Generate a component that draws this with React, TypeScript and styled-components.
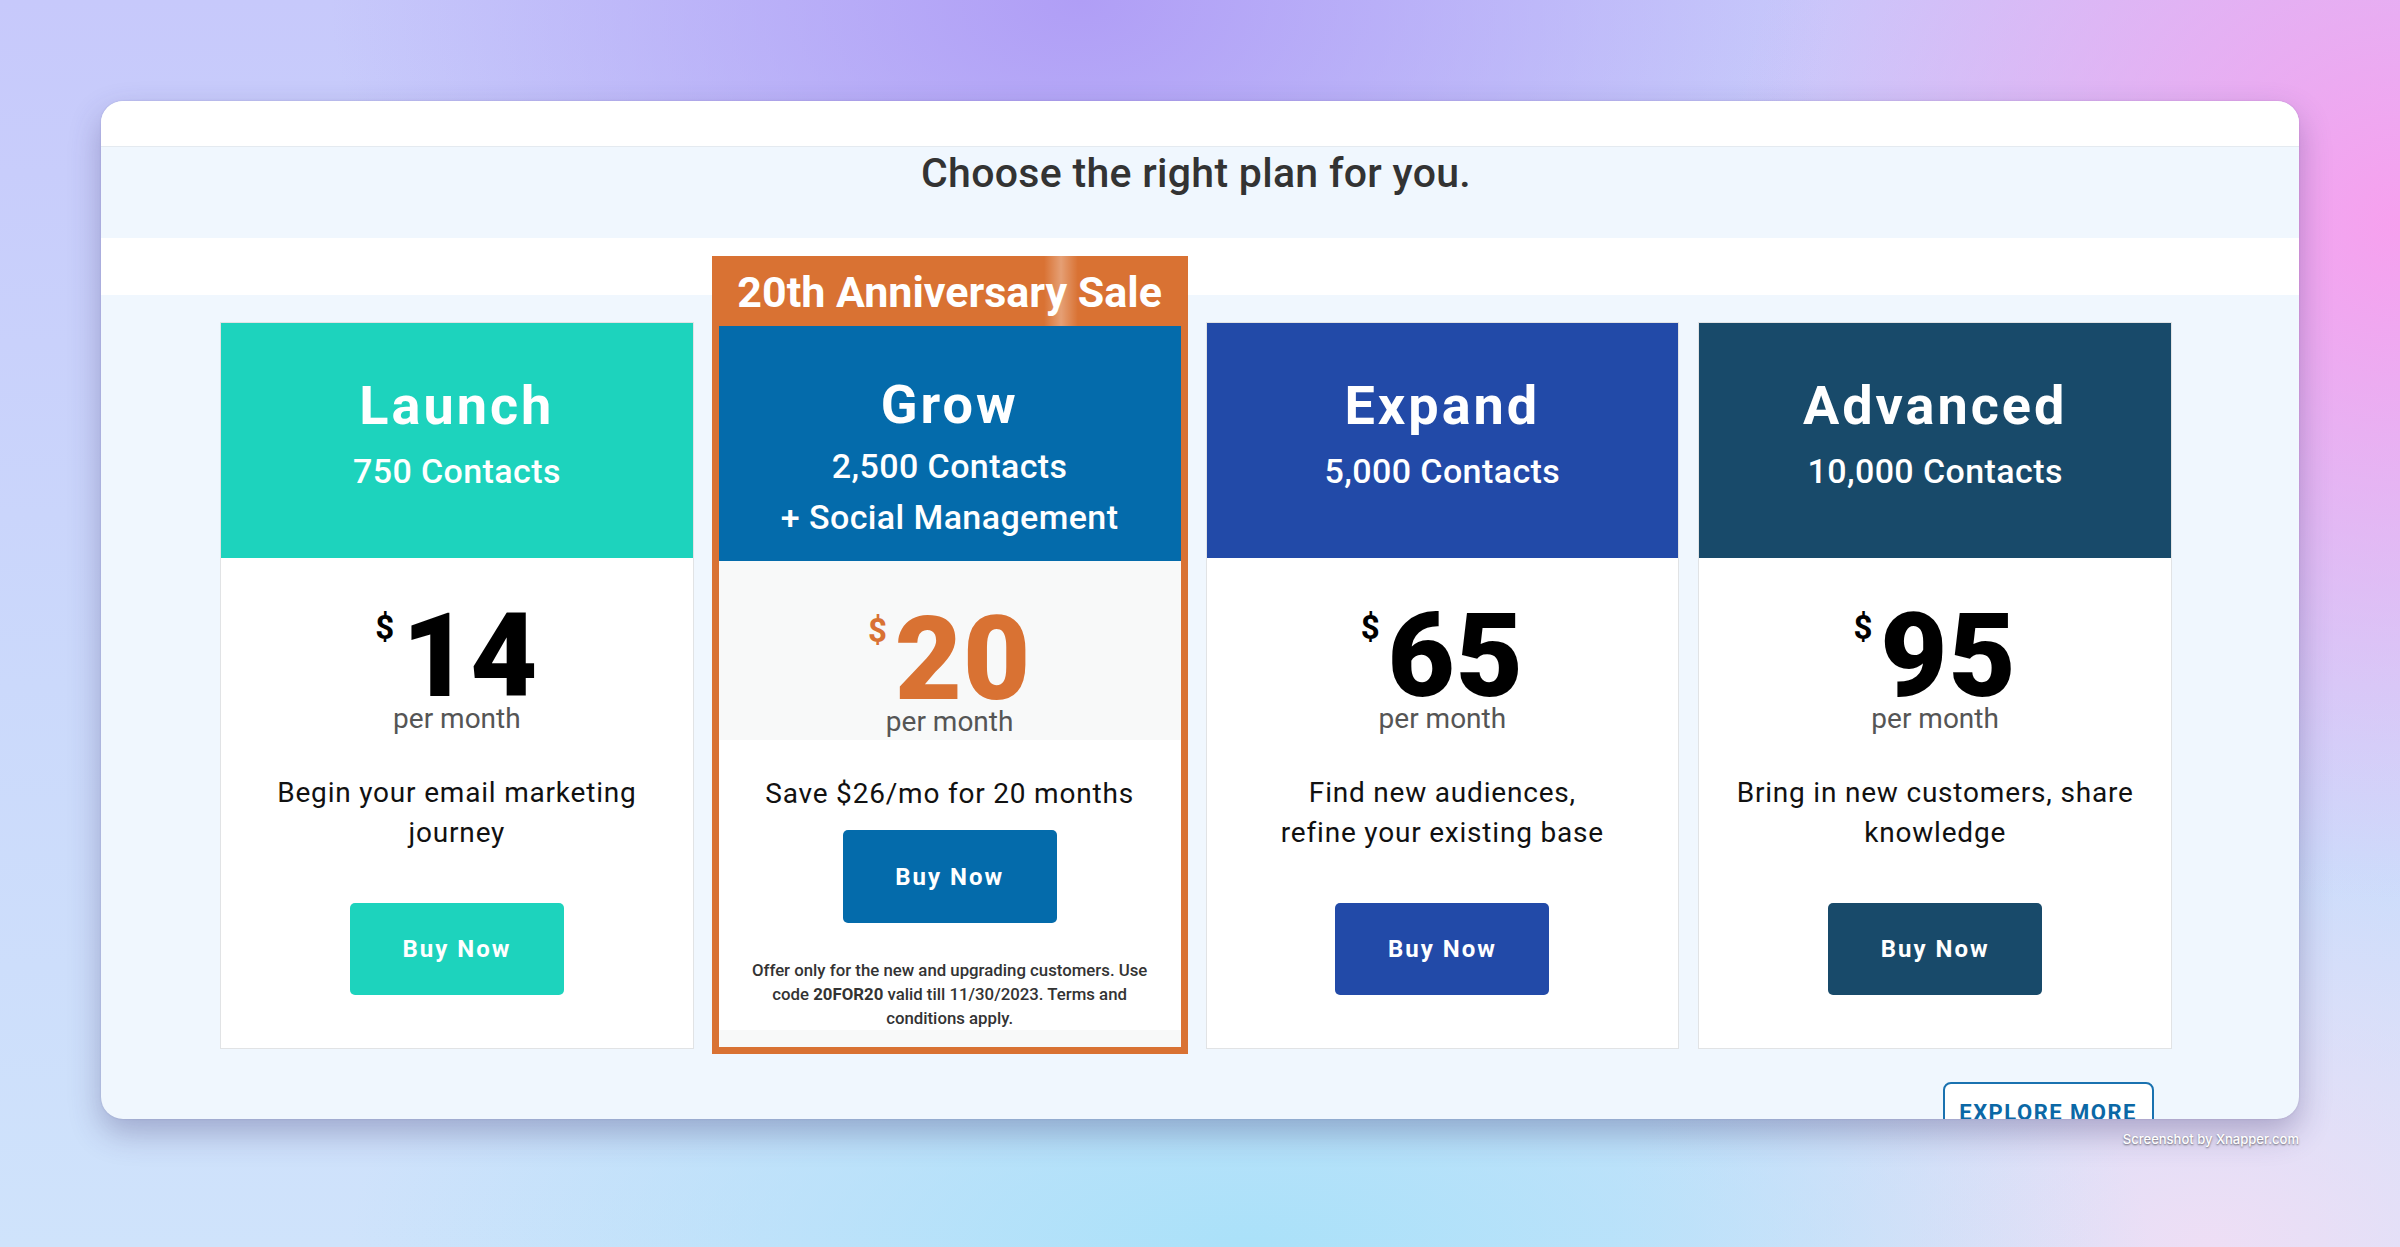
import * as React from 'react';
import styled, { createGlobalStyle } from 'styled-components';

const ORANGE = '#d97233';

const GlobalStyle = createGlobalStyle`
  html, body {
    margin: 0;
    padding: 0;
  }
  * {
    box-sizing: border-box;
  }
  body {
    width: 2400px;
    height: 1247px;
    overflow: hidden;
    font-family: Roboto, "Liberation Sans", Arial, sans-serif;
    background:
      radial-gradient(ellipse 1000px 650px at 45% 0%, rgba(176, 158, 246, 1) 0%, rgba(176, 158, 246, 0) 75%),
      radial-gradient(ellipse 900px 900px at 100% 18%, rgba(247, 160, 238, 1) 0%, rgba(247, 160, 238, 0) 75%),
      radial-gradient(ellipse 1200px 520px at 52% 100%, rgba(170, 225, 249, 1) 0%, rgba(170, 225, 249, 0) 75%),
      radial-gradient(ellipse 800px 520px at 92% 100%, rgba(238, 222, 245, 1) 0%, rgba(238, 222, 245, 0) 75%),
      linear-gradient(180deg, #c7c9fb 0%, #cbd9fb 55%, #cfe3fb 100%);
  }
`;

const Stage = styled.div`
  padding: 101px 101px 0;
`;

const Window = styled.div`
  width: 2198px;
  height: 1018px;
  border-radius: 22px;
  overflow: hidden;
  background: #f0f7fe;
  box-shadow: 0 14px 32px rgba(60, 50, 110, 0.32), 0 0 2px rgba(60, 50, 110, 0.2);
`;

const TopBar = styled.div`
  height: 46px;
  background: #fff;
  border-bottom: 1px solid #e4eaf0;
`;

const TitleBand = styled.div`
  height: 91px;
  padding: 2px 127px 0 119px;
`;

const Title = styled.h1`
  margin: 0;
  font-size: 41px;
  line-height: 48px;
  font-weight: 500;
  color: #333;
  text-align: center;
  letter-spacing: 0.3px;
`;

const WhiteBand = styled.div`
  height: 57px;
  background: #fff;
`;

const Plans = styled.div`
  display: grid;
  grid-template-columns: repeat(4, 1fr);
  column-gap: 19px;
  align-items: start;
  padding: 27px 127px 0 119px;
`;

const Card = styled.div<{ $featured?: boolean }>`
  display: flex;
  flex-direction: column;
  background: ${p => (p.$featured ? '#f8f9f9' : '#fff')};
  border: ${p => (p.$featured ? `7px solid ${ORANGE}` : '1px solid #e1e3e5')};
  border-top-width: ${p => (p.$featured ? 0 : 1)}px;
  margin: ${p => (p.$featured ? '-66px -1px 0' : '0')};
  padding-bottom: ${p => (p.$featured ? 17 : 0)}px;
`;

const Banner = styled.div`
  position: relative;
  height: 70px;
  margin: 0 -7px;
  background: ${ORANGE};
  color: #fff;
  font-size: 43px;
  line-height: 72px;
  font-weight: 700;
  text-align: center;
  overflow: hidden;
  &::after {
    content: '';
    position: absolute;
    top: 0;
    bottom: 0;
    left: 332px;
    width: 34px;
    background: linear-gradient(90deg, rgba(255, 255, 255, 0) 0%, rgba(255, 255, 255, 0.32) 50%, rgba(255, 255, 255, 0) 100%);
  }
`;

const Head = styled.div<{ $color: string; $featured?: boolean }>`
  flex-shrink: 0;
  height: 235px;
  padding-top: ${p => (p.$featured ? 46 : 50)}px;
  background: ${p => p.$color};
  color: #fff;
  text-align: center;
`;

const PlanName = styled.div`
  font-size: 54px;
  line-height: 65px;
  font-weight: 700;
  letter-spacing: 3px;
`;

const Contacts = styled.div<{ $featured?: boolean }>`
  margin-top: ${p => (p.$featured ? 4 : 8)}px;
  font-size: 34px;
  line-height: 51px;
  font-weight: 500;
  letter-spacing: 0.4px;
`;

const PriceBox = styled.div<{ $featured?: boolean }>`
  padding: 40px 0 4px;
  background: ${p => (p.$featured ? '#f8f9f9' : '#fff')};
  text-align: center;
`;

const Amount = styled.div<{ $color: string }>`
  display: flex;
  justify-content: center;
  align-items: flex-start;
  color: ${p => p.$color};
`;

const Currency = styled.span`
  font-size: 33px;
  line-height: 32px;
  font-weight: 700;
  margin: 14px 8px 0 0;
`;

const Digits = styled.span`
  font-size: 116px;
  line-height: 116px;
  font-weight: 900;
  letter-spacing: 1px;
`;

const PerMonth = styled.div`
  margin-top: -9px;
  font-size: 28px;
  line-height: 28px;
  color: #555;
`;

const Body = styled.div<{ $featured?: boolean }>`
  background: #fff;
  padding: ${p => (p.$featured ? '34px 26px 0' : '36px 21px 53px')};
  text-align: center;
`;

const Description = styled.p`
  margin: 0;
  font-size: 28px;
  line-height: 40px;
  color: #111;
  letter-spacing: 0.8px;
`;

const BuyButton = styled.button<{ $color: string; $featured?: boolean }>`
  display: block;
  width: 214px;
  height: ${p => (p.$featured ? 93 : 92)}px;
  margin: ${p => (p.$featured ? 16 : 50)}px auto 0;
  border: none;
  border-radius: 5px;
  background: ${p => p.$color};
  color: #fff;
  font-family: inherit;
  font-size: 24px;
  font-weight: 700;
  letter-spacing: 2px;
  cursor: pointer;
`;

const FinePrint = styled.p`
  margin: 35px 0 0;
  font-size: 16.8px;
  line-height: 24px;
  font-weight: 500;
  color: #333;
  strong {
    font-weight: 700;
  }
`;

const ExploreRow = styled.div`
  display: flex;
  justify-content: flex-end;
  padding: 28px 145px 0 0;
`;

const ExploreButton = styled.button`
  padding: 16px 15px 20px 14px;
  border: 2px solid #1a72b0;
  border-radius: 8px;
  background: #fff;
  color: #0b68a6;
  font-family: inherit;
  font-size: 22px;
  line-height: 26px;
  font-weight: 700;
  letter-spacing: 1.5px;
  cursor: pointer;
`;

const Watermark = styled.div`
  width: 2198px;
  margin-top: 12px;
  text-align: right;
  font-family: Inter, "Liberation Sans", sans-serif;
  font-size: 13px;
  line-height: 16px;
  font-weight: 500;
  color: #fff;
  text-shadow: 0 1px 2px rgba(0, 0, 0, 0.55);
`;

interface Plan {
  name: string;
  contacts: string[];
  price: string;
  color: string;
  desc: string[];
  featured?: boolean;
}

const plans: Plan[] = [
  { name: 'Launch', contacts: ['750 Contacts'], price: '14', color: '#1dd3bd', desc: ['Begin your email marketing journey'] },
  {
    name: 'Grow',
    contacts: ['2,500 Contacts', '+ Social Management'],
    price: '20',
    color: '#046bab',
    desc: ['Save $26/mo for 20 months'],
    featured: true,
  },
  { name: 'Expand', contacts: ['5,000 Contacts'], price: '65', color: '#224aa8', desc: ['Find new audiences,', 'refine your existing base'] },
  { name: 'Advanced', contacts: ['10,000 Contacts'], price: '95', color: '#184a6a', desc: ['Bring in new customers, share knowledge'] },
];

const PlanCard = ({ plan }: { plan: Plan }) => {
  const f = plan.featured;
  return (
    <Card $featured={f}>
      {f && <Banner>20th Anniversary Sale</Banner>}
      <Head $color={plan.color} $featured={f}>
        <PlanName>{plan.name}</PlanName>
        <Contacts $featured={f}>
          {plan.contacts.map((c, i) => <div key={i}>{c}</div>)}
        </Contacts>
      </Head>
      <PriceBox $featured={f}>
        <Amount $color={f ? ORANGE : '#000'}>
          <Currency>$</Currency>
          <Digits>{plan.price}</Digits>
        </Amount>
        <PerMonth>per month</PerMonth>
      </PriceBox>
      <Body $featured={f}>
        <Description>
          {plan.desc.map((d, i) => (
            <React.Fragment key={i}>
              {i > 0 && <br />}
              {d}
            </React.Fragment>
          ))}
        </Description>
        <BuyButton $color={plan.color} $featured={f}>Buy Now</BuyButton>
        {f && (
          <FinePrint>
            Offer only for the new and upgrading customers. Use code <strong>20FOR20</strong> valid till 11/30/2023. Terms and conditions apply.
          </FinePrint>
        )}
      </Body>
    </Card>
  );
};

export default function App() {
  return (
    <>
      <GlobalStyle />
      <Stage>
        <Window>
          <TopBar />
          <TitleBand>
            <Title>Choose the right plan for you.</Title>
          </TitleBand>
          <WhiteBand />
          <Plans>
            {plans.map(p => <PlanCard key={p.name} plan={p} />)}
          </Plans>
          <ExploreRow>
            <ExploreButton>EXPLORE MORE</ExploreButton>
          </ExploreRow>
        </Window>
        <Watermark>Screenshot by Xnapper.com</Watermark>
      </Stage>
    </>
  );
}
